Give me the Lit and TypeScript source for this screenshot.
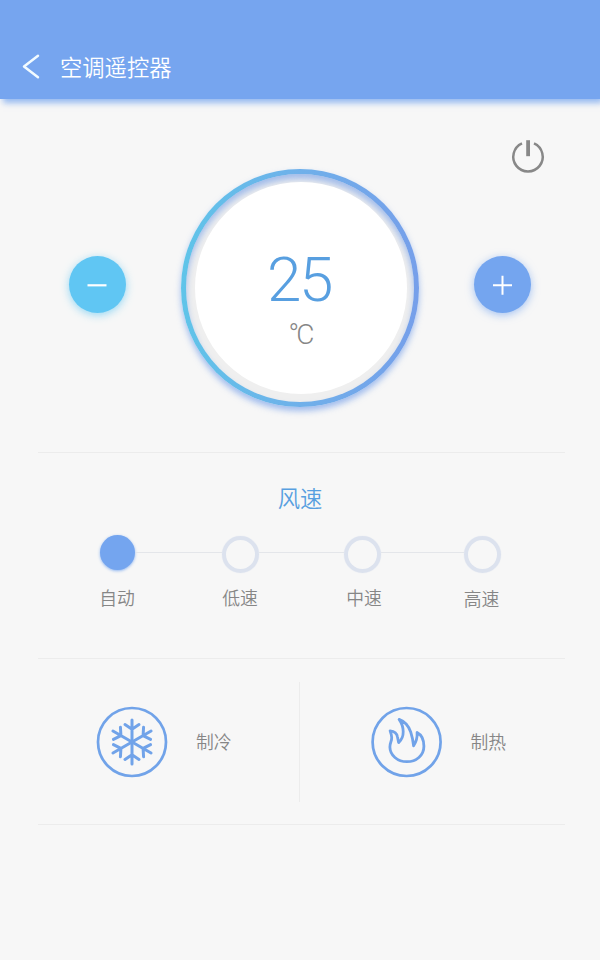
import { LitElement, html, css, svg } from "lit";
import { customElement, state } from "lit/decorators.js";
import { classMap } from "lit/directives/class-map.js";

const SPEEDS = ["自动", "低速", "中速", "高速"];

@customElement("app-root")
export class AppRoot extends LitElement {
  @state() private temperature = 25;
  @state() private speed = 0;

  static styles = css`
    :host {
      display: flex;
      flex-direction: column;
      box-sizing: border-box;
      width: 600px;
      height: 960px;
      overflow: hidden;
      background: #f7f7f7;
      color: #868686;
      font-family: Roboto, "Noto Sans CJK SC", sans-serif;
      font-weight: 350;
    }
    * { box-sizing: border-box; }
    svg { display: block; flex: none; overflow: visible; }
    button {
      border: 0;
      padding: 0;
      background: none;
      font: inherit;
      color: inherit;
    }
    .bar {
      flex: none;
      display: flex;
      align-items: center;
      gap: 20px;
      height: 99px;
      padding: 35px 0 0 22px;
      background: #76a5ef;
      box-shadow: 3px 4px 6px rgba(118, 165, 239, 0.75);
      color: #fff;
    }
    .title { margin: 2px 0 0; font-size: 22.3px; line-height: 32px; font-weight: 350; }
    .climate {
      display: grid;
      grid-template-columns: 58px 238px 58px;
      justify-content: space-between;
      align-content: start;
      height: 353px;
      padding: 37px 68.5px 0;
    }
    .power { grid-column: 1 / -1; justify-self: end; margin-right: -17px; height: 40px; }
    .round {
      display: grid;
      place-items: center;
      width: 57px;
      height: 57px;
      margin-top: 80px;
      border-radius: 50%;
      color: #fff;
    }
    .minus { background: #60c6f3; box-shadow: 0 2px 9px rgba(96, 198, 243, 0.65); }
    .plus { background: #74a5ef; box-shadow: 0 2px 9px rgba(116, 165, 239, 0.65); }
    .ring {
      display: grid;
      place-items: center;
      width: 238px;
      height: 238px;
      margin-top: -7px;
      border-radius: 50%;
      padding: 5px;
      background: linear-gradient(90deg, #5fc4e9, #6fb0ea 50%, #769fea);
      box-shadow: 0 4px 6px rgba(112, 155, 232, 0.65);
    }
    .well {
      display: grid;
      place-items: center;
      width: 228px;
      height: 228px;
      border-radius: 50%;
      background: #efefef;
      box-shadow: inset 0 5px 6px rgba(112, 155, 232, 0.6);
    }
    .face {
      display: flex;
      flex-direction: column;
      align-items: center;
      width: 212px;
      height: 212px;
      padding-top: 67px;
      margin-left: 2px;
      border-radius: 50%;
      background: #fff;
    }
    .degrees {
      margin-left: -4px;
      font-size: 62px;
      line-height: 62px;
      font-weight: 300;
      letter-spacing: -2.5px;
      color: #589fe0;
    }
    .unit {
      margin: 9px -1px 0 0;
      padding-right: 3px;
      font-size: 28px;
      line-height: 30px;
      font-weight: 300;
      letter-spacing: -3px;
      color: #868686;
    }
    .panel { margin: 0 35px 0 38px; border-top: 1px solid #ececec; }
    .wind { height: 206px; padding-top: 30px; }
    .heading {
      margin: 0;
      font-size: 22.3px;
      line-height: 32px;
      font-weight: 350;
      text-align: center;
      color: #589fe0;
      padding-right: 3px;
    }
    .steps {
      display: grid;
      grid-template-columns: 37px 86px 37px 85px 37px 83px 37px;
      margin: 20px 0 0 60.5px;
    }
    .step { display: flex; flex-direction: column; align-items: center; }
    .dot {
      width: 37px;
      height: 37px;
      margin-top: 1px;
      border: 4.5px solid #dce2ee;
      border-radius: 50%;
      box-shadow: 0 0 1px #dce2ee;
    }
    .dot.on {
      width: 35px;
      height: 35px;
      margin: 0 0 3px;
      border: 0;
      background: #74a5ef;
      box-shadow: 0 1px 3px rgba(116, 165, 239, 0.8);
    }
    .name { font-size: 17.8px; line-height: 24px; white-space: nowrap; }
    .step .name { margin-top: 14px; }
    .step:nth-of-type(3) .name { margin-left: 4px; }
    .step:nth-of-type(4) .name { margin: 15px 1px 0 0; }
    .link { height: 1px; margin-top: 17px; background: #e4e6ea; }
    .modes { display: flex; height: 166px; }
    .modes .split { width: 1px; height: 120px; margin-top: 23px; background: #ececec; }
    .mode {
      display: flex;
      align-items: center;
      gap: 28px;
      width: 261px;
      padding-left: 58px;
    }
    .mode .name { margin-top: 3px; }
    .mode.warm { width: 265px; padding-left: 70.5px; }
    .foot { flex: 1; }
  `;

  private renderSnow() {
    return svg`<g stroke="#71a3e9" stroke-width="3" stroke-linecap="round" stroke-linejoin="round" fill="none">
      ${[0, 60, 120, 180, 240, 300].map(
        (a) => svg`<path transform="rotate(${a} 36 36)" d="M36 36V14M29 18.6L36 23.2L43 18.6" />`
      )}
    </g>`;
  }

  private renderFlame() {
    return svg`<path fill="none" stroke="#71a3e9" stroke-width="2.8" stroke-linejoin="round"
      d="M28.1 13.4C33.3 15.2 37.3 19.3 39.7 26C41.3 30.8 42.1 35.5 42.6 39.8C45.1 36 46.5 31.5 46.1 26.4
         C50.4 28.6 52.9 34 52.9 40.2C52.9 49.5 45.2 55.7 35.9 55.7C26.5 55.7 19 49.3 18.9 41
         C18.9 36.5 20.9 35 20.7 31.5C20.6 29 19.9 27 19.1 24.8C23.3 25.2 26 27.6 26.5 31L27.6 36.6
         C31 33.6 32.3 29.8 32.2 25.6C32.1 21 30.9 17.3 28.1 13.4Z" />`;
  }

  private renderMode(name: string, glyph: unknown, extra = false) {
    return html`<button class=${classMap({ mode: true, warm: extra })}>
      <svg width="72" height="72" viewBox="0 0 72 72">
        <circle cx=${extra ? 35.6 : 36} cy="36" r="34" fill="none" stroke="#71a3e9" stroke-width="2.7" />
        ${glyph}
      </svg>
      <span class="name">${name}</span>
    </button>`;
  }

  render() {
    return html`
      <header class="bar">
        <svg width="18" height="26" viewBox="0 0 18 26">
          <path d="M16 1.8L2 12.5L16 23.2" fill="none" stroke="#f2fbff" stroke-width="2.5" stroke-linecap="round" stroke-linejoin="round" />
        </svg>
        <h1 class="title">空调遥控器</h1>
      </header>

      <section class="climate">
        <button class="power" aria-label="电源">
          <svg width="40" height="40" viewBox="0 0 40 40">
            <g fill="none" stroke="#888">
              <path stroke-width="2.5" d="M13 7.4A14.7 14.7 0 1 0 25 7.4" />
              <path stroke-width="3.8" d="M19.1 4.2V20.2" />
            </g>
          </svg>
        </button>
        <button class="round minus" @click=${() => this.temperature--}>
          <svg width="20" height="20" viewBox="0 0 20 20"><path d="M0.5 10.3H19.5" stroke="#fff" stroke-width="2.2" /></svg>
        </button>
        <div class="ring">
          <div class="well">
            <div class="face">
              <span class="degrees">${this.temperature}</span>
              <span class="unit">°C</span>
            </div>
          </div>
        </div>
        <button class="round plus" @click=${() => this.temperature++}>
          <svg width="20" height="20" viewBox="0 0 20 20"><path d="M1 10.3H20M10.5 0.8V19.8" stroke="#fff" stroke-width="2" /></svg>
        </button>
      </section>

      <section class="panel wind">
        <h2 class="heading">风速</h2>
        <div class="steps">
          ${SPEEDS.map(
            (name, i) => html`
              ${i ? html`<span class="link"></span>` : ""}
              <button class="step" @click=${() => (this.speed = i)}>
                <span class=${classMap({ dot: true, on: this.speed === i })}></span>
                <span class="name">${name}</span>
              </button>
            `
          )}
        </div>
      </section>

      <section class="panel modes">
        ${this.renderMode("制冷", this.renderSnow())}
        <span class="split"></span>
        ${this.renderMode("制热", this.renderFlame(), true)}
      </section>
      <div class="panel foot"></div>
    `;
  }
}
